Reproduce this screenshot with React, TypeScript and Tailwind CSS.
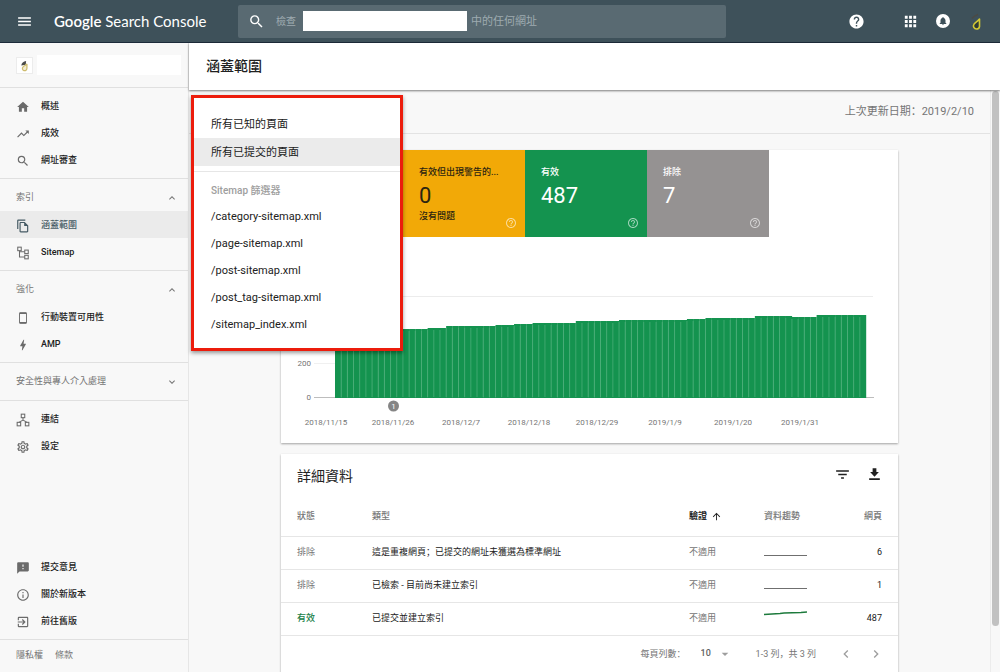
import type { ReactNode, ComponentType } from "react";
import {
  MdMenu, MdSearch, MdHelp, MdApps, MdNotifications, MdHome, MdTrendingUp,
  MdOutlineFileCopy, MdBolt, MdOutlineSettings, MdFeedback, MdInfoOutline,
  MdExitToApp, MdExpandLess, MdExpandMore, MdFilterList, MdArrowUpward,
  MdArrowDropDown, MdChevronLeft, MdChevronRight, MdHelpOutline,
} from "react-icons/md";

type Icon = ComponentType<{ className?: string }>;

const SitemapIcon: Icon = ({ className }) => (
  <svg viewBox="0 0 24 24" fill="none" stroke="currentColor" strokeWidth="1.8" className={className}>
    <rect x="3" y="2" width="6" height="6" />
    <rect x="15" y="7" width="6" height="6" />
    <rect x="15" y="16" width="6" height="6" />
    <path d="M6 8v11h9M6 10h9" />
  </svg>
);

const LinksIcon: Icon = ({ className }) => (
  <svg viewBox="0 0 24 24" fill="none" stroke="currentColor" strokeWidth="1.8" className={className}>
    <rect x="9" y="2" width="6" height="6" />
    <rect x="2" y="16" width="6" height="6" />
    <rect x="16" y="16" width="6" height="6" />
    <path d="M12 8v4M5 16l7-4 7 4" />
  </svg>
);

const PhoneIcon: Icon = ({ className }) => (
  <svg viewBox="0 0 24 24" fill="none" stroke="currentColor" className={className}>
    <rect x="6" y="3" width="12" height="18" rx="1" strokeWidth="1.6" />
    <path d="M6 4h12M6 20h12" strokeWidth="2.6" />
  </svg>
);

const DownloadIcon: Icon = ({ className }) => (
  <svg viewBox="0 0 24 24" fill="currentColor" className={className}>
    <path d="M9 2h6v6h4l-7 7.500-7-7.500h4zM3.500 18h17v2.800h-17z" />
  </svg>
);

const BellBadge: Icon = ({ className }) => (
  <span className={`flex items-center justify-center rounded-full bg-white text-[#3e515a] ${className}`}>
    <MdNotifications className="size-[10px]" />
  </span>
);

const DropLogo: Icon = ({ className }) => (
  <svg viewBox="0 0 16 20" fill="none" className={className}>
    <path d="M4 7.500c1.500-1.500 3-3.500 6-4" stroke="#4b4a45" strokeWidth="1.500" />
    <path d="M11.500 8v7.500a3 3 0 0 1-3 2.500 3 3 0 0 1-2.600-4.600C7 11.500 9.500 10.500 11.500 8z" fill="#2f3a33" stroke="#d3c834" strokeWidth="1.600" strokeLinejoin="round" />
  </svg>
);

const SiteLogo: Icon = ({ className }) => (
  <svg viewBox="0 0 16 16" fill="none" className={className}>
    <path d="M4 8c.5-3 2.500-5 6-5.500L9.500 7z" fill="#4a4a4a" />
    <path d="M11 6v5.500a2.800 2.800 0 1 1-5-1.600C7 8.500 10 8 11 6z" stroke="#cdbb6c" strokeWidth="1.500" fill="#f3ecd2" />
  </svg>
);

/** Full-width punctuation set at the lower left of its cell. */
const P = ({ children }: { children: ReactNode }) => (
  <span lang="zh-CN" className="font-['Noto_Sans_CJK_SC',sans-serif]">{children}</span>
);

function NavItem({ icon: I, label, active }: { icon: Icon; label: string; active?: boolean }) {
  return (
    <li>
      <a
        href="#"
        className={`flex h-[27px] items-center gap-[11px] pt-0.5 pl-4 text-[9px] font-medium ${
          active ? "bg-[#ebebeb] text-[#455a64]" : "text-[#212121]"
        }`}
      >
        <I className={`size-[14px] ${active ? "text-[#455a64]" : "text-[#6b6b6b]"}`} />
        {label}
      </a>
    </li>
  );
}

function NavSection({ title, open, children }: { title?: string; open?: boolean; children?: ReactNode }) {
  return (
    <section className="border-t border-[#e0e0e0] pt-1 pb-[5px]">
      {title && (
        <button type="button" className="flex h-7 w-full items-center justify-between pt-0.5 pr-[10px] pl-4 text-[9px] text-[#757575]">
          {title}
          {open ? <MdExpandLess className="size-3" /> : <MdExpandMore className="size-3" />}
        </button>
      )}
      {children && <ul>{children}</ul>}
    </section>
  );
}

function Sidebar() {
  return (
    <nav className="flex w-[189px] shrink-0 flex-col border-r border-[#e6e6e6] bg-[#f8f8f8]">
      <div className="flex h-11 items-center gap-1 pl-4">
        <span className="flex size-[17px] items-center justify-center border border-[#ececec] bg-white">
          <SiteLogo className="size-[13px]" />
        </span>
        <button type="button" aria-label="資源" className="h-5 w-36 bg-white" />
      </div>
      <NavSection>
        <NavItem icon={MdHome} label="概述" />
        <NavItem icon={MdTrendingUp} label="成效" />
        <NavItem icon={MdSearch} label="網址審查" />
      </NavSection>
      <NavSection title="索引" open>
        <NavItem icon={MdOutlineFileCopy} label="涵蓋範圍" active />
        <NavItem icon={SitemapIcon} label="Sitemap" />
      </NavSection>
      <NavSection title="強化" open>
        <NavItem icon={PhoneIcon} label="行動裝置可用性" />
        <NavItem icon={MdBolt} label="AMP" />
      </NavSection>
      <NavSection title="安全性與專人介入處理" />
      <NavSection>
        <NavItem icon={LinksIcon} label="連結" />
        <NavItem icon={MdOutlineSettings} label="設定" />
      </NavSection>
      <ul className="mt-auto pb-[5px]">
        <NavItem icon={MdFeedback} label="提交意見" />
        <NavItem icon={MdInfoOutline} label="關於新版本" />
        <NavItem icon={MdExitToApp} label="前往舊版" />
      </ul>
      <div className="flex h-[33px] items-center gap-3 border-t border-[#e0e0e0] pl-4 text-[9px] text-[#757575]">
        <a href="#">隱私權</a>
        <a href="#">條款</a>
      </div>
    </nav>
  );
}

function Header() {
  return (
    <header className="flex h-[43px] shrink-0 items-center border-b border-[#1c2b3a] bg-[#3e515a] pr-4 pl-4 text-white">
      <button type="button" aria-label="選單">
        <MdMenu className="size-[17px]" />
      </button>
      <a href="#" className="ml-[21px] w-[184px] shrink-0 font-['Lato',sans-serif] text-[15px] whitespace-nowrap">
        <span className="font-semibold">Google</span> Search Console
      </a>
      <form className="flex h-[33px] w-[488px] items-center rounded-xs bg-[#596a72] pl-[10px] text-[11px] text-[#9eaab0]">
        <MdSearch className="size-[17px] text-white" />
        <label htmlFor="inspect" className="mr-[7px] ml-[11px] text-[10px]">檢查</label>
        <input id="inspect" type="text" className="mr-1 h-5 w-[164px] bg-white px-1 text-[#212121] outline-none" />
        <span className="pt-0.5">中的任何網址</span>
      </form>
      <div className="ml-auto flex items-center">
        <button type="button" aria-label="說明" className="mr-[37px]"><MdHelp className="size-[17px]" /></button>
        <button type="button" aria-label="應用程式" className="mr-[17px]"><MdApps className="size-[17px]" /></button>
        <button type="button" aria-label="通知" className="mr-[18px]"><BellBadge className="size-[14px]" /></button>
        <button type="button" aria-label="帳戶"><DropLogo className="h-5 w-4" /></button>
      </div>
    </header>
  );
}

function Tile({ label, value, note, className }: { label: string; value: string; note?: string; className: string }) {
  return (
    <div className={`relative h-[87px] w-[122px] px-4 pt-4 text-[9px] ${className}`}>
      <p className="leading-3 font-medium whitespace-nowrap">{label}</p>
      <p className="mt-1 text-[22px] leading-7">{value}</p>
      {note && <p className="leading-3 font-medium">{note}</p>}
      <MdHelpOutline className="absolute right-2 bottom-2 size-3 text-white/60" />
    </div>
  );
}

/* [first bar, top of bar] for each run of equal values, in chart units */
const runs: [number, number][] = [
  [0, 94], [11, 92], [15, 91], [18, 89], [26, 88], [29, 87], [32, 86], [39, 84],
  [46, 83], [57, 82], [60, 81], [68, 79], [74, 80], [78, 78],
];
const BAR_COUNT = 86;
const BAR_STEP = 531 / BAR_COUNT;
const topOf = (i: number) => runs.reduce((y, [from, top]) => (i >= from ? top : y), runs[0][1]);

const dates: [number, string][] = [
  [45, "2018/11/15"], [112, "2018/11/26"], [180, "2018/12/7"], [248, "2018/12/18"],
  [316, "2018/12/29"], [384, "2019/1/9"], [452, "2019/1/20"], [519, "2019/1/31"],
];

function Chart() {
  const bars = Array.from({ length: BAR_COUNT }, (_, i) => i);
  return (
    <svg viewBox="0 0 617 206" className="block w-full font-['Roboto',sans-serif] text-[8px]" role="img" aria-label="網頁數">
      <path d="M33 59.500h559" stroke="#ececec" />
      <path d="M33 126.500h21" stroke="#f0f0f0" />
      <path d="M33 160.500h560" stroke="#bdbdbd" />
      {bars.map((i) => (
        <rect key={i} x={54 + i * BAR_STEP} y={topOf(i)} width={BAR_STEP + 0.2} height={161 - topOf(i)} fill="#14934f" />
      ))}
      {bars.slice(1).map((i) => (
        <path key={i} d={`M${54 + i * BAR_STEP} ${topOf(i) + 2}V160`} stroke="#52b27e" strokeWidth="0.7" />
      ))}
      <g fill="#757575">
        <text x="30" y="129" textAnchor="end">200</text>
        <text x="30" y="163" textAnchor="end">0</text>
        {dates.map(([x, d]) => (
          <text key={d} x={x} y="188" textAnchor="middle">{d}</text>
        ))}
      </g>
      <circle cx="112.500" cy="169" r="5.500" fill="#858585" />
      <text x="112.500" y="172" textAnchor="middle" fill="#fff">1</text>
    </svg>
  );
}

const rows = [
  { status: "排除", type: <>這是重複網頁<P>；</P>已提交的網址未獲選為標準網址</>, trend: "flat", pages: 6 },
  { status: "排除", type: <>已檢索 - 目前尚未建立索引</>, trend: "flat", pages: 1 },
  { status: "有效", type: <>已提交並建立索引</>, trend: "up", pages: 487 },
];

function Sparkline({ trend }: { trend: string }) {
  return (
    <svg viewBox="0 0 43 16" fill="none" className="h-4 w-[43px]">
      {trend === "up" ? (
        <path d="M0 3.500L16 2.500 20 2l17-.5 6-.5" stroke="#1d7a3c" strokeWidth="1.400" />
      ) : (
        <path d="M0 10.500h43" stroke="#6f6f6f" strokeWidth="1.200" />
      )}
    </svg>
  );
}

function Details() {
  return (
    <section className="bg-white text-[9px] text-[#757575] shadow-[0_1px_2px_rgba(0,0,0,0.35)]">
      <div className="flex h-11 items-center px-4">
        <h2 className="text-[14px] text-[#212121]">詳細資料</h2>
        <div className="ml-auto flex items-center gap-4 pb-[3px] text-[#212121]">
          <button type="button" aria-label="篩選"><MdFilterList className="size-[17px]" /></button>
          <button type="button" aria-label="下載"><DownloadIcon className="size-[15px]" /></button>
        </div>
      </div>
      <table className="w-full table-fixed text-left">
        <colgroup>
          <col className="w-[91px]" />
          <col />
          <col className="w-[75px]" />
          <col className="w-[75px]" />
          <col className="w-[59px]" />
        </colgroup>
        <thead>
          <tr className="h-[38px] border-b border-[#e6e6e6]">
            <th className="pl-4 font-medium">狀態</th>
            <th className="font-medium">類型</th>
            <th className="font-bold text-[#212121]">
              <span className="flex items-center gap-1">驗證 <MdArrowUpward className="size-[11px]" /></span>
            </th>
            <th className="font-medium">資料趨勢</th>
            <th className="pr-4 text-right font-medium">網頁</th>
          </tr>
        </thead>
        <tbody>
          {rows.map((r) => (
            <tr key={r.pages} className="h-[33px] border-b border-[#e6e6e6]">
              <td className={`pl-4 ${r.trend === "up" ? "font-medium text-[#188048]" : ""}`}>{r.status}</td>
              <td className="text-[#212121]">{r.type}</td>
              <td>不適用</td>
              <td><Sparkline trend={r.trend} /></td>
              <td className="pr-4 text-right text-[#212121]">{r.pages}</td>
            </tr>
          ))}
        </tbody>
      </table>
      <div className="flex h-[37px] items-center justify-end pr-[14px]">
        <label htmlFor="page-size">每頁列數<P>：</P></label>
        <span className="relative mr-[25px] ml-[15px] flex items-center">
          <select id="page-size" className="w-[30px] appearance-none bg-transparent font-medium text-[#616161]">
            <option>10</option>
          </select>
          <MdArrowDropDown className="pointer-events-none absolute -right-0.5 size-4 text-[#9e9e9e]" />
        </span>
        <span>1-3 列<P>，</P>共 3 列</span>
        <button type="button" aria-label="上一頁" className="ml-[22px] text-[#9e9e9e]"><MdChevronLeft className="size-4" /></button>
        <button type="button" aria-label="下一頁" className="ml-[14px] text-[#9e9e9e]"><MdChevronRight className="size-4" /></button>
      </div>
    </section>
  );
}

function FilterMenu() {
  const sitemaps = ["/category-sitemap.xml", "/page-sitemap.xml", "/post-sitemap.xml", "/post_tag-sitemap.xml", "/sitemap_index.xml"];
  return (
    <div className="absolute top-[5px] left-[2px] z-10 w-[212px] border-3 border-[#ec1c0c] bg-white pt-3 pb-[9px] text-[11px] text-[#212121] shadow-[0_2px_4px_rgba(0,0,0,0.4)]">
      <button type="button" className="block h-7 w-full pt-0.5 pl-[17px] text-left">所有已知的頁面</button>
      <button type="button" className="block h-7 w-full bg-[#ebebeb] pt-0.5 pl-[17px] text-left">所有已提交的頁面</button>
      <div className="mt-[5px] border-t border-[#e6e6e6] pt-[5px]">
        <p className="pl-[17px] text-[10px] leading-[27px] font-medium text-[#9e9e9e]">Sitemap 篩選器</p>
        {sitemaps.map((s) => (
          <button key={s} type="button" className="block h-[27px] w-full pl-[17px] text-left">{s}</button>
        ))}
      </div>
    </div>
  );
}

export default function App() {
  return (
    <div className="flex h-screen flex-col overflow-hidden bg-[#f8f8f8] font-['Roboto','Noto_Sans_CJK_TC',sans-serif]" lang="zh-TW">
      <Header />
      <div className="flex min-h-0 flex-1">
        <Sidebar />
        <div className="flex min-w-0 flex-1 flex-col">
          <div className="relative z-10 flex h-[47px] shrink-0 items-center bg-white pl-[17px] shadow-[0_1px_2px_rgba(0,0,0,0.5)]">
            <h1 className="text-[14px] font-medium text-[#212121]">涵蓋範圍</h1>
          </div>
          <div className="relative flex min-h-0 flex-1">
            <FilterMenu />
            <main className="min-w-0 flex-1 overflow-hidden">
              <div className="flex h-11 items-center justify-end border-b border-[#e3e3e3] pr-4 text-[11px] text-[#757575]">
                <p>上次更新日期<P>：</P>2019/2/10</p>
              </div>
              <div className="mx-auto mt-4 flex max-w-[617px] flex-col gap-[11px]">
                <section className="bg-white shadow-[0_1px_2px_rgba(0,0,0,0.35)]">
                  <div className="flex pl-[122px]">
                    <Tile label="有效但出現警告的..." value="0" note="沒有問題" className="bg-[#f2a907] text-[#2b2411]" />
                    <Tile label="有效" value="487" className="bg-[#14934f] text-white" />
                    <Tile label="排除" value="7" className="bg-[#959292] text-white" />
                  </div>
                  <Chart />
                </section>
                <Details />
              </div>
            </main>
            <div className="w-[10px] shrink-0 border-l border-[#ececec] px-px pt-px">
              <div className="h-[92%] rounded-full bg-[#c1c1c1]" />
            </div>
          </div>
        </div>
      </div>
    </div>
  );
}
